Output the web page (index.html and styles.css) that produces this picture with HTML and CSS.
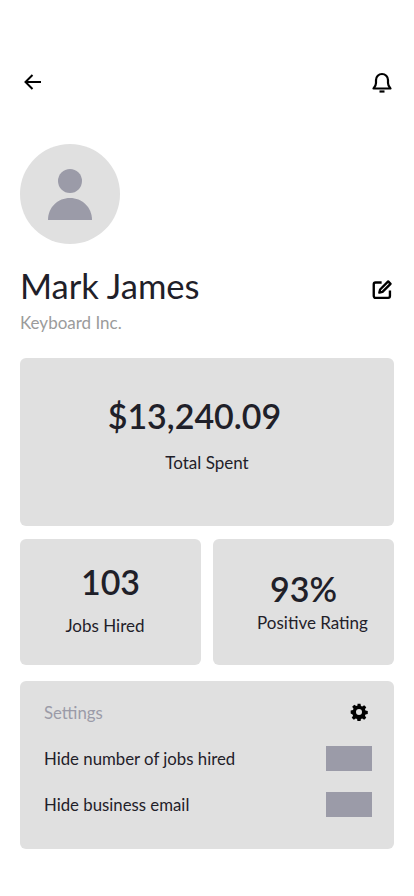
FILE: index.html
```html
<!DOCTYPE html>
<html lang="en">
<head>
<meta charset="utf-8">
<title>Profile</title>
<link rel="stylesheet" href="styles.css">
</head>
<body>
<main class="page">
  <header class="topbar">
    <svg class="icon" viewBox="0 0 24 24" fill="none" stroke="#000" stroke-width="2"><path d="M20 12H4M11.500 5l-7 7 7 7"/></svg>
    <svg class="icon" viewBox="0 0 24 24" fill="none" stroke="#000" stroke-width="2.200" stroke-linejoin="round"><path d="M3.500 18.500c1.600-1.600 2.500-2.600 2.500-5.500v-3a6 6 0 0 1 12 0v3c0 2.900.9 3.900 2.500 5.500z"/><path d="M9.500 21.500h5"/></svg>
  </header>
  <div class="avatar">
    <svg class="person" width="44" height="51" viewBox="0 0 44 51" fill="#9b9ba8"><circle cx="22" cy="12" r="12"/><path d="M0 51C0 38 10 29 22 29s22 9 22 22z"/></svg>
  </div>
  <div class="identity">
    <div>
      <h1 class="name">Mark James</h1>
      <p class="company">Keyboard Inc.</p>
    </div>
    <svg class="icon edit" viewBox="0 0 24 24" fill="none" stroke="#000" stroke-width="2.700" stroke-linejoin="round"><path d="M20.500 13v6.500a2 2 0 0 1-2 2H4a2 2 0 0 1-2-2V6a2 2 0 0 1 2-2h7"/><path d="M18.500 2.800l2.700 2.700L12 14.700l-3.600.9.900-3.600z"/></svg>
  </div>
  <section class="card total">
    <div class="big">$13,240.09</div>
    <div class="label">Total Spent</div>
  </section>
  <div class="pair">
    <section class="card stat jobs">
      <div class="big">103</div>
      <div class="label">Jobs Hired</div>
    </section>
    <section class="card stat rating">
      <div class="big">93%</div>
      <div class="label">Positive Rating</div>
    </section>
  </div>
  <section class="card settings">
    <div class="row head">
      <span class="muted">Settings</span>
      <svg class="gear" viewBox="0 0 24 24" fill="#000"><path fill-rule="evenodd" d="M10 1h4l.6 3.100 1.700.7 2.600-1.800 2.800 2.800-1.800 2.600.7 1.700 3.100.6v4l-3.100.6-.7 1.700 1.800 2.600-2.800 2.800-2.600-1.800-1.700.7-.6 3.100h-4l-.6-3.100-1.700-.7-2.600 1.800-2.800-2.800 1.800-2.600-.7-1.700L.9 14v-4l3.100-.6.700-1.700L2.900 5.100l2.800-2.800 2.600 1.800 1.700-.7zM12 8a4 4 0 1 0 0 8 4 4 0 0 0 0-8z"/></svg>
    </div>
    <div class="row option"><span>Hide number of jobs hired</span><span class="toggle"></span></div>
    <div class="row option"><span>Hide business email</span><span class="toggle"></span></div>
  </section>
</main>
</body>
</html>
```
FILE: styles.css
```css
* { box-sizing: border-box; }
html, body { margin: 0; background: #fff; }
body { font-family: Lato, "Open Sans", sans-serif; color: #1f2029; }
.page { width: 414px; height: 896px; padding: 70px 20px 0; overflow: hidden; }
.topbar { display: flex; justify-content: space-between; padding: 0 0 0 1px; height: 24px; }
.icon { width: 24px; height: 24px; display: block; }
.avatar { width: 100px; height: 100px; margin-top: 50px; border-radius: 50%; background: #e0e0e0; display: flex; align-items: center; justify-content: center; }
.person { margin-top: 1px; }
.identity { display: flex; justify-content: space-between; margin-top: 21px; }
.name { margin: 0; font-size: 34.6px; line-height: 42px; font-weight: 400; }
.company { margin: 6px 0 0; font-size: 17px; line-height: 20px; color: #9b9b9b; }
.edit { width: 21px; height: 21px; margin: 14px 1px 0 0; }
.card { background: #e0e0e0; border-radius: 6px; }
.big { font-size: 34px; line-height: 41px; font-weight: 600; }
.label { font-size: 17px; line-height: 22px; }
.total { height: 168px; margin-top: 25px; padding-top: 37px; text-align: center; }
.total .big { padding-right: 25px; }
.total .label { margin-top: 16px; }
.pair { display: flex; gap: 12px; margin-top: 13px; }
.stat { flex: 1; height: 126px; text-align: center; }
.jobs { padding-top: 22px; }
.jobs .label { margin-top: 13px; padding-right: 11px; }
.rating { padding-top: 29px; }
.rating .label { margin-top: 3px; padding-left: 18px; }
.settings { height: 168px; margin-top: 16px; padding: 19px 22px 0 24px; font-size: 16.8px; }
.row { display: flex; justify-content: space-between; align-items: center; }
.head { height: 24px; }
.muted { color: #9b9ba8; }
.gear { width: 18px; height: 18px; margin-right: 4px; }
.option { height: 26px; margin-top: 20px; }
.head + .option { margin-top: 21px; }
.toggle { width: 46px; height: 25px; background: #9b9ba8; }
```
